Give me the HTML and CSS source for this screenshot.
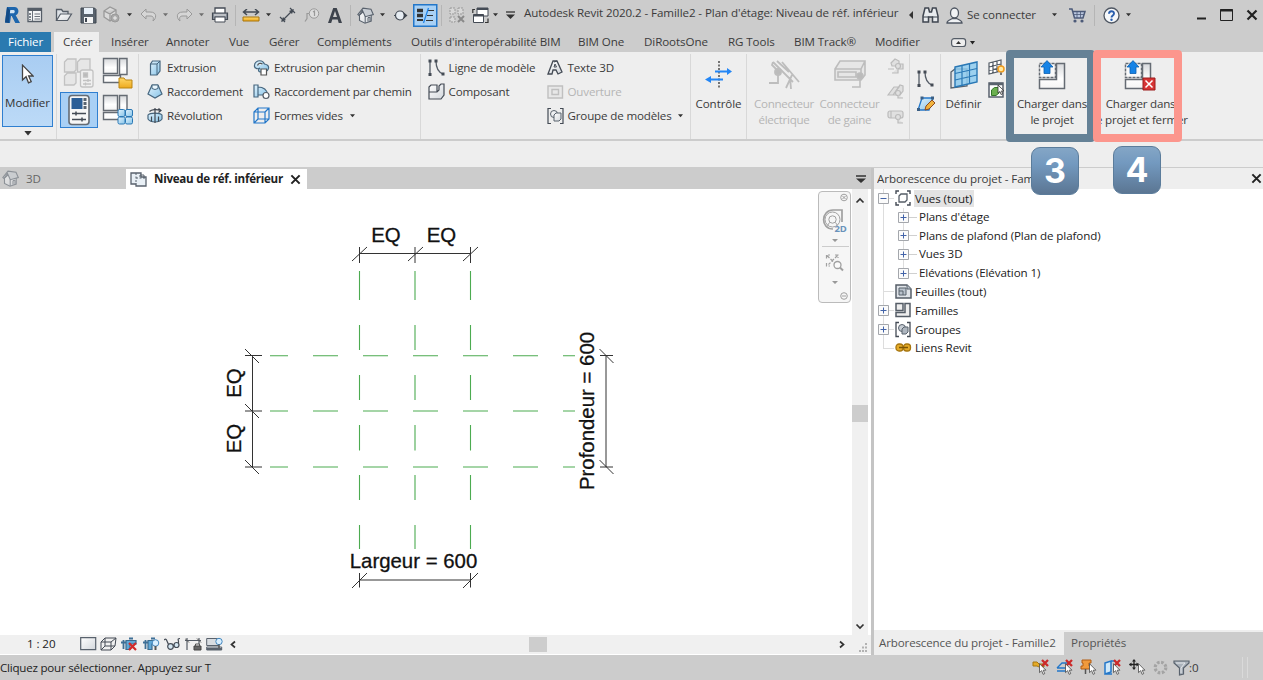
FILE: index.html
```html
<!DOCTYPE html>
<html lang="fr">
<head>
<meta charset="utf-8">
<title>Autodesk Revit 2020.2 - Famille2</title>
<link rel="stylesheet" href="styles.css">
</head>
<body>
<svg class="sprite" width="0" height="0" aria-hidden="true">
  <defs>
    <linearGradient id="g-metal" x1="0" y1="0" x2="1" y2="1"><stop offset="0" stop-color="#fff"/><stop offset="1" stop-color="#d3d7dc"/></linearGradient>
    <linearGradient id="g-plate" x1="0" y1="0" x2="0" y2="1"><stop offset="0" stop-color="#d6d8db"/><stop offset=".6" stop-color="#fff"/><stop offset="1" stop-color="#f4f4f4"/></linearGradient>
    <linearGradient id="g-sky" x1="0" y1="0" x2="1" y2="1"><stop offset="0" stop-color="#e2f3fd"/><stop offset="1" stop-color="#86c3e8"/></linearGradient>
    <linearGradient id="g-gold" x1="0" y1="0" x2="0" y2="1"><stop offset="0" stop-color="#ffd768"/><stop offset="1" stop-color="#eda91e"/></linearGradient>
    <symbol id="caret" viewBox="0 0 6 4"><path d="M0 0h6L3 3.600z" fill="#333"/></symbol>
    <symbol id="sep" viewBox="0 0 1 21"><path d="M.5 0v21" stroke="#b5b5b5"/></symbol>
    <symbol id="cross" viewBox="0 0 12 12"><path d="M1.500 1.500l9 9M10.500 1.500l-9 9" stroke="#222" stroke-width="2.200"/></symbol>
    <symbol id="redx" viewBox="0 0 8 8"><path d="M1 1l6 6M7 1L1 7" stroke="#cc2a2a" stroke-width="2.300"/></symbol>
    <symbol id="cursor" viewBox="0 0 9 14"><path d="M1 .8v10.400l2.500-2.300 1.700 4.300 1.900-.8-1.800-4H8.500z" fill="#fff" stroke="#444" stroke-width=".9"/></symbol>
    <symbol id="house" viewBox="0 0 17 17"><path d="M2.500 8v5.500L8 16.200l6.200-2.200V8L8 3z" fill="url(#g-metal)" stroke="#59626d" stroke-width="1.100"/><path d="M.8 7.500L6 1.200l8 1 2.300 5.300-8 2.200L5.500 3.500 2 8.500z" fill="#c9ced4" stroke="#59626d" stroke-width="1.100"/><path d="M8.200 9.500v6.500M11 14.500v-3.800l2-.5v3.700" fill="none" stroke="#59626d"/></symbol>
    <symbol id="family" viewBox="0 0 32 32"><path d="M1.500 1.500h14v15h-14z" fill="url(#g-plate)" stroke="#656b73" stroke-width="1.400"/><path d="M17.500 1.500h7.500v16h-7.500z" fill="url(#g-plate)" stroke="#656b73" stroke-width="1.400"/><path d="M1.500 18.500h17v7h-17z" fill="#fdfdfd" stroke="#656b73" stroke-width="1.400"/></symbol>
    <symbol id="plus" viewBox="0 0 11 11"><path d="M.5.500h10v10H.5z" fill="#fbfbfb" stroke="#a4a7ac"/><path d="M2.500 5.500h6M5.500 2.500v6" stroke="#4263a8"/></symbol>
    <symbol id="minus" viewBox="0 0 11 11"><path d="M.5.500h10v10H.5z" fill="#fbfbfb" stroke="#a4a7ac"/><path d="M2.500 5.500h6" stroke="#4263a8"/></symbol>
    <symbol id="load" viewBox="0 0 32 31"><path d="M1.500 3.500h16v14h-16z" fill="#fafafa" stroke="#656b73" stroke-width="1.500" stroke-dasharray="3 1"/><path d="M1.500 19.500h17v-16h8v25h-25z" fill="url(#g-plate)" stroke="#656b73" stroke-width="1.500"/><path d="M9 .600l6 6.400h-3V13.500H6V7H3z" fill="#1683e6" stroke="#0c5fb0" stroke-width=".8"/></symbol>
    <symbol id="curve" viewBox="0 0 17 18"><path d="M2 2v13M8 2c0 7 2 11 7 13" fill="none" stroke="#555d67" stroke-width="1.300"/><path d="M.5.500h3v3h-3zM.5 14h3v3h-3zM6.500.500h3v3h-3zM13.500 13.500h3v3h-3z" fill="#444b55"/></symbol>
  </defs>
</svg>

<div class="app">
  <header class="titlebar">
    <svg width="17" height="18"><path d="M1 16.500L3 1h7.500c4.500 0 5.500 6.500 1.200 8.300L16 17h-4.700l-3.600-7H7L6 17z" fill="#1e66ad"/><path d="M6.300 4h3.200c1.700 0 1.700 3.300-.4 3.300H5.800z" fill="#cfe3f5"/><path d="M1 16.500L3 1l3 3-1 13z" fill="#124a86"/></svg>
    <svg width="16" height="16"><path d="M1 1.500h13.500v13H1z" fill="#f3f4f5" stroke="#555d67" stroke-width="1.300"/><path d="M1 3h13.500" stroke="#555d67" stroke-width="2"/><path d="M3 6v7" stroke="#555d67" stroke-width="1.500" stroke-dasharray="2 1"/><path d="M5.500 4v10M7.500 7h5.500M7.500 9.500h5.500M7.500 12h5.500" stroke="#6a717a"/></svg>
    <svg width="18" height="16"><path d="M1.500 13.500V2.500h5l1.500 2h5v3" fill="#dde1e6" stroke="#555d67" stroke-width="1.300"/><path d="M1.500 13.500l4-6.500h11l-4 6.500z" fill="url(#g-metal)" stroke="#555d67" stroke-width="1.200"/></svg>
    <svg width="17" height="17"><path d="M1 1h13.500L16 2.500V16H1z" fill="#59626d" stroke="#3f4650"/><path d="M4 1h9v6H4z" fill="#e8f0f8"/><path d="M4 10h9v6H4z" fill="#f5f5f5"/><path d="M6 11v4" stroke="#3f4650" stroke-width="2"/></svg>
    <svg width="18" height="18"><path d="M1 5l6-4 6 3v8l-6 3-6-4zM1 5l6 3 6-4M7 8v7" fill="#d9d9d9" stroke="#999" stroke-width="1.300"/><circle cx="12" cy="12" r="4" fill="#aaa" stroke="#999"/><path d="M10 12h4M12 10v4" stroke="#eee"/></svg>
    <svg class="dd"><use href="#caret"/></svg>
    <svg width="17" height="15"><path d="M1 6l5-5v3h4c8 0 6 7 3 9 1-4 0-5-3-5H6v3z" fill="#d6d6d6" stroke="#999"/></svg>
    <svg class="dd dim"><use href="#caret"/></svg>
    <svg width="17" height="15"><path d="M16 6l-5-5v3H7C-1 4 1 11 4 13 3 9 4 8 7 8h4v3z" fill="#d6d6d6" stroke="#999"/></svg>
    <svg class="dd dim"><use href="#caret"/></svg>
    <svg width="18" height="16"><path d="M4 6V1h10v5" fill="#fff" stroke="#444b55" stroke-width="1.300"/><path d="M1.500 6h15v6.500h-15z" fill="#8b929c" stroke="#444b55" stroke-width="1.200"/><path d="M4 10h10v5H4z" fill="#fff" stroke="#444b55"/><path d="M3 8h12" stroke="#eee"/></svg>
    <svg width="1" height="21"><use href="#sep"/></svg>
    <svg width="18" height="13"><path d="M2 3h14M5 0L1.500 3 5 6M13 0l3.500 3L13 6" fill="none" stroke="#444b55" stroke-width="1.500"/><path d="M1 8h16v4H1z" fill="url(#g-gold)" stroke="#a8750b"/></svg>
    <svg class="dd"><use href="#caret"/></svg>
    <svg width="17" height="17"><path d="M3 14L14 3M1 10l5 5M11 1l5 5" stroke="#444b55" stroke-width="1.200"/><path d="M2 15l2-5 3 3zM15 2l-5 2 3 3z" fill="#444b55"/></svg>
    <svg width="16" height="15"><circle cx="10" cy="5.500" r="4.700" fill="#ddd" stroke="#999"/><path d="M9 4l1.500-1v5M5 5.500H3v5l-2 3" fill="none" stroke="#999" stroke-width="1.200"/></svg>
    <svg width="14" height="15"><path d="M0 15L5.200 0h3.500L14 15h-3.300l-1-3.500H4.300L3.200 15zM5 9h4L7 3z" fill="#3d434c" fill-rule="evenodd"/></svg>
    <svg width="1" height="21"><use href="#sep"/></svg>
    <svg width="17" height="17"><use href="#house"/></svg>
    <svg class="dd"><use href="#caret"/></svg>
    <svg width="15" height="13"><circle cx="6" cy="6.500" r="4.500" fill="#e7edf3" stroke="#444b55" stroke-width="1.200"/><path d="M7.500 1.500l6 5-6 5c3-3 3-7 0-10z" fill="#3d434c"/><path d="M0 6.500h2" stroke="#444b55"/></svg>
    <svg width="25" height="23"><path d="M.75.750h23v21.500h-23z" fill="#a9d1f5" stroke="#2377c9" stroke-width="1.500"/><path d="M4 6.500h6M4 11.500h6" stroke="#333" stroke-width="3.500"/><path d="M4 16h6" stroke="#333" stroke-width="2"/><path d="M15 6.500h6M14 11.500h6M13 16.500h7" stroke="#333"/><path d="M15.500 4l-5 15" stroke="#2386e8" stroke-width="1.300"/></svg>
    <svg width="1" height="21"><use href="#sep"/></svg>
    <svg width="17" height="17"><path d="M1 1h5v6H1zM9 1h5v6H9zM1 10h5v5H1z" fill="#d8d8d8" stroke="#999" stroke-dasharray="2 1"/><path d="M9 9l6 6M15 9l-6 6" stroke="#8a8a8a" stroke-width="2"/></svg>
    <svg width="17" height="17"><path d="M5 1h11v8H5z" fill="#fff" stroke="#444b55"/><path d="M5 2h11" stroke="#444b55" stroke-width="2"/><path d="M1.500 7.500h10v8h-10z" fill="#fff" stroke="#444b55"/><path d="M1.500 8.500h10" stroke="#444b55" stroke-width="2"/><path d="M3 2.500H.8v3.500M16 11.500v4h-3" fill="none" stroke="#333" stroke-width="1.200"/></svg>
    <svg class="dd"><use href="#caret"/></svg>
    <svg width="9" height="9"><path d="M0 1h9" stroke="#333" stroke-width="1.300"/><path d="M0 3.500h9L4.500 8z" fill="#333"/></svg>
    <span class="title-text">Autodesk Revit 2020.2 - Famille2 - Plan d'étage: Niveau de réf. inférieur</span>
    <svg width="5" height="8"><path d="M4 0v8L0 4z" fill="#333"/></svg>
    <svg width="17" height="16"><path d="M1 9L3 1h3.500l1 4h2l1-4H14l2 8v6h-5.500v-5h-4v5H1z" fill="#e8ebee" stroke="#3f4650" stroke-width="1.500"/><path d="M1 10h6M10 10h6" stroke="#3f4650"/></svg>
    <svg width="17" height="17"><ellipse cx="8.500" cy="6" rx="4" ry="5" fill="#f0f2f4" stroke="#4f5763" stroke-width="1.300"/><path d="M1 16c0-3 4-3.500 5.500-4.500h4C12 12.500 16 13 16 16z" fill="#f0f2f4" stroke="#4f5763" stroke-width="1.300"/></svg>
    <span class="signin">Se connecter</span>
    <svg class="dd"><use href="#caret"/></svg>
    <svg width="17" height="15"><path d="M0 1h3l2.500 9H14l2-6.500H4" fill="#b9c6de" stroke="#4c5a78" stroke-width="1.500"/><path d="M5 6.500h10M8 4v6M11.500 4v6" stroke="#4c5a78" stroke-width=".8"/><circle cx="6" cy="13" r="1.600" fill="#4c5a78"/><circle cx="13" cy="13" r="1.600" fill="#4c5a78"/></svg>
    <svg width="1" height="21"><use href="#sep"/></svg>
    <svg width="17" height="17"><circle cx="8.500" cy="8.500" r="7.500" fill="#f6f8fa" stroke="#4f5763" stroke-width="1.300"/><path d="M6 6.800C6 3.300 11 3.500 11 6.500c0 2-2.500 1.800-2.500 4" fill="none" stroke="#2b5fae" stroke-width="1.900"/><circle cx="8.500" cy="12.700" r="1.200" fill="#2b5fae"/></svg>
    <svg class="dd"><use href="#caret"/></svg>
    <svg width="9" height="10"><path d="M0 8.500h9" stroke="#222" stroke-width="2"/></svg>
    <svg width="13" height="12"><path d="M.5.500h12v11H.5z" fill="none" stroke="#222"/><path d="M0 1.500h13" stroke="#222" stroke-width="2"/></svg>
    <svg width="12" height="12"><use href="#cross"/></svg>
  </header>

  <nav class="tabs">
    <span class="tab tab-file">Fichier</span>
    <span class="tab tab-on">Créer</span>
    <span class="tab">Insérer</span>
    <span class="tab">Annoter</span>
    <span class="tab">Vue</span>
    <span class="tab">Gérer</span>
    <span class="tab">Compléments</span>
    <span class="tab">Outils d'interopérabilité BIM</span>
    <span class="tab">BIM One</span>
    <span class="tab">DiRootsOne</span>
    <span class="tab">RG Tools</span>
    <span class="tab">BIM Track®</span>
    <span class="tab">Modifier</span>
    <svg width="25" height="9"><rect x=".6" y=".6" width="14" height="8" rx="2.500" fill="#eee" stroke="#555d67" stroke-width="1.200"/><path d="M5 6h5L7.500 3z" fill="#333"/><path d="M19 3h5L21.500 6.500z" fill="#222"/></svg>
  </nav>

  <section class="ribbon">
    <div class="panel modify">
      <button class="modify-btn">
        <svg width="13" height="20" viewBox="0 0 9 14"><use href="#cursor"/></svg>
        <span>Modifier</span>
      </button>
      <svg class="modify-dd" width="8" height="5" viewBox="0 0 6 4"><use href="#caret"/></svg>
    </div>

    <div class="panel props">
      <svg width="32" height="32" viewBox="0 0 32 32"><g fill="#e6e6e6" stroke="#c2c2c2" stroke-width="1.300"><path d="M1.500 5l3-3H13v11l-2 2H1.500zM14.500 5l3-3H27v11l-2 2H14.500zM1.500 19l3-3H13v10l-2 2H1.500z"/><rect x="17.500" y="13" width="12.500" height="17" rx="2" fill="#f0f0f0"/><path d="M20.500 16h4v4h-4zM20 23.500h8M20 27h8M25 22v3M22.500 25.500v3" fill="#bbb"/></g></svg>
      <svg width="32" height="32" viewBox="0 0 32 32"><use href="#family" width="32" height="32"/><path d="M17 21h5l1.500 2H30v8H17z" fill="url(#g-gold)" stroke="#bb8513"/></svg>
      <span class="type-btn"><svg width="22" height="32"><rect x="1" y="1.500" width="20" height="29" rx="3" fill="#f7f7f7" stroke="#656b73" stroke-width="1.600"/><path d="M3.500 4h11v11h-11z" fill="#2c5f97"/><path d="M17 4v11" stroke="#5a6470" stroke-width="3" stroke-dasharray="3 1"/><path d="M4 19.500h14M4 25.500h14M8 17.500v4M14 23.500v4" stroke="#444b55" stroke-width="1.500"/></svg></span>
      <svg width="32" height="32" viewBox="0 0 32 32"><use href="#family" width="32" height="32"/><g fill="url(#g-sky)" stroke="#2a78b5"><rect x="16" y="15.500" width="7" height="7" rx="1.500"/><rect x="23.500" y="15.500" width="7" height="7" rx="1.500"/><rect x="16" y="23" width="7" height="7" rx="1.500"/><rect x="23.500" y="23" width="7" height="7" rx="1.500"/></g></svg>
    </div>

    <div class="panel forms">
      <span class="cmd"><svg width="16" height="18"><path d="M3.500 5l2-3H13v10l-3 4H3.500z" fill="url(#g-sky)" stroke="#46667f" stroke-width="1.200"/><path d="M3.500 5H10v11M10 5l3-3" fill="none" stroke="#46667f"/></svg>Extrusion</span>
      <span class="cmd"><svg width="17" height="18"><path d="M1.500 7.500c-.5-4 3-6.500 7-5.500 2 .5 2 2 3 3 3 .5 4.500 2 4 4.500-.4 2-2 3-4 3.500H7c-2-.5-2-3 0-4-2 1.500-5 .5-5.500-1.500z" fill="url(#g-sky)" stroke="#46667f" stroke-width="1.200"/><path d="M4.500 6.500c1-2.500 3.500-2.500 5-1.500M8 10h5.500v6H8z" fill="#fff" stroke="#555" stroke-width="1.200"/></svg>Extrusion par chemin</span>
      <span class="cmd"><svg width="16" height="18"><path d="M5 2h6l4 9-7 4-7-4z" fill="url(#g-sky)" stroke="#46667f" stroke-width="1.200"/><path d="M5 2h6v3.500L8 6.500l-3-1z" fill="#e9f6fd" stroke="#46667f"/></svg>Raccordement</span>
      <span class="cmd"><svg width="17" height="18"><path d="M1 2h4v12H1zM5 4c5 0 9 3 10 8H5z" fill="url(#g-sky)" stroke="#46667f" stroke-width="1.200"/><circle cx="13" cy="12.500" r="3" fill="#fff" stroke="#555d67" stroke-width="1.200"/></svg>Raccordement par chemin</span>
      <span class="cmd"><svg width="16" height="18"><path d="M1 8c2-2.500 12-2.500 14 0v4c-3 4-11 4-14 0z" fill="url(#g-sky)" stroke="#46667f" stroke-width="1.200"/><path d="M2.500 4.500c2-2 7-2.500 11-1M11.500 1.500L14 3.500l-2.500 2M8 1v15M4.500 9.500v5M11.500 9.500v5" fill="none" stroke="#3f4650" stroke-width="1.200"/></svg>Révolution</span>
      <span class="cmd"><svg width="17" height="18"><path d="M1 5l4-4h11v11l-4 4H1zM1 5h11v11M12 5l4-4M5 1v11h11M5 12l-4 4" fill="none" stroke="#2377c9" stroke-width="1.200"/></svg>Formes vides<svg class="dd cmd-dd"><use href="#caret"/></svg></span>
    </div>

    <div class="panel model">
      <span class="cmd"><svg width="17" height="18"><use href="#curve"/></svg>Ligne de modèle</span>
      <span class="cmd"><svg width="17" height="18"><path d="M1 15L6 2h4l5 11-4 2-2-4H6l-1 4z" fill="url(#g-metal)" stroke="#444b55" stroke-width="1.300"/><path d="M7 8l1-3 1.500 3zM10 2l-3 1" fill="#fff" stroke="#444b55"/></svg>Texte 3D</span>
      <span class="cmd"><svg width="17" height="18"><path d="M1 4l2-2h6v7H1zM1 9h8l2-2V3l2-2h3v11l-3 4H1z" fill="url(#g-metal)" stroke="#444b55" stroke-width="1.200"/></svg>Composant</span>
      <span class="cmd off"><svg width="17" height="18"><path d="M1 3h14.500v12H1zM5 6.500h6.500v5H5z" fill="#e8e8e8" stroke="#c0c0c0" stroke-width="1.400"/></svg>Ouverture</span>
      <span></span>
      <span class="cmd"><svg width="17" height="18"><path d="M4 1.500H1v15h3M13 1.500h3v15h-3" fill="none" stroke="#444b55" stroke-width="1.200"/><circle cx="7" cy="7" r="3.500" fill="url(#g-metal)" stroke="#59626d"/><path d="M7 8l2-2h5v6l-2 2H7z" fill="url(#g-metal)" stroke="#59626d"/></svg>Groupe de modèles<svg class="dd cmd-dd"><use href="#caret"/></svg></span>
    </div>

    <div class="panel big control">
      <svg width="28" height="30"><path d="M14 1v28" stroke="#555" stroke-width="1.600" stroke-dasharray="2 1.500"/><path d="M10 11.500h13M5 19.500h13" stroke="#2386f5" stroke-width="1.800"/><path d="M22 8l5 3.500-5 3.500zM6 16l-6 3.500L6 23z" fill="#2386f5"/></svg>
      <span>Contrôle</span>
    </div>

    <div class="panel connectors off">
      <div class="big">
        <svg width="32" height="30"><g fill="none" stroke="#bdbdbd" stroke-width="1.800"><path d="M5 2l20 20M9 1l12 11M14 2l17 20M24 15l-6 13M22 17l1 12M5 2l-1 3 8 8"/><circle cx="10" cy="12" r="3" fill="#bbb"/><path d="M10 15v8H1"/></g></svg>
        <span>Connecteur<br>électrique</span>
      </div>
      <div class="big">
        <svg width="32" height="30"><g fill="#e6e6e6" stroke="#bdbdbd" stroke-width="1.600"><path d="M1 9l5-8h25v14l-4 5H1zM1 9h26v11M27 9l4-8M4 12h18v5H4z"/><circle cx="26" cy="16" r="3" fill="#bbb"/><path d="M26 19v8h-8" fill="none"/></g></svg>
        <span>Connecteur<br>de gaine</span>
      </div>
      <div class="stack">
        <svg width="18" height="17"><g fill="#e0e0e0" stroke="#bbb" stroke-width="1.200"><path d="M4 5l4-4 4 2v3h4v5h-6V8H5z"/><circle cx="11" cy="8" r="2.500"/><path d="M1 11h6M11 10v5H5"/></g></svg>
        <svg width="18" height="17"><g fill="#e0e0e0" stroke="#bbb" stroke-width="1.200"><path d="M1 12L7 4h5l-6 8zM6 12l7-10 3 1v5l-3 4z"/><circle cx="11" cy="10" r="2.500"/><path d="M11 12v3h5"/></g></svg>
        <svg width="18" height="17"><g fill="#e0e0e0" stroke="#bbb" stroke-width="1.200"><rect x="1" y="3" width="15" height="7" rx="2"/><path d="M4 3v7"/><circle cx="11" cy="9" r="2.500"/><path d="M11 11v4h5"/></g></svg>
      </div>
    </div>

    <div class="panel datum">
      <svg width="17" height="18"><use href="#curve"/></svg>
      <svg width="18" height="18"><path d="M5 3h11l-4 12H1z" fill="url(#g-sky)" stroke="#2377c9" stroke-width="1.300"/><path d="M3.500 1.500h3v3h-3zM14 1.500h3v3h-3zM0 13h3v3H0z" fill="#3b5f84"/><path d="M8 15l1-4 6-6 3 3-6 6z" fill="#f2b33d" stroke="#8d4b20"/></svg>
    </div>

    <div class="panel workplane">
      <div class="big">
        <svg width="28" height="30"><path d="M1 12l4-3h12v17L1 28z" fill="#dfe3e7" stroke="#59626d" stroke-width="1.300"/><path d="M5 7l22-5v20L5 27z" fill="#8ecbee" fill-opacity=".85" stroke="#2a78b5" stroke-width="1.400"/><path d="M12 5.500v20M19.500 4v20M5 13.500l22-5M5 20l22-5" stroke="#2a78b5" stroke-width="1.200"/></svg>
        <span>Définir</span>
      </div>
      <div class="stack">
        <svg width="17" height="17"><path d="M1 4l12-3v11L1 15zM5 3v11M9 2v11M1 8l12-3M1 11.500l12-3" fill="#fff" stroke="#555d67" stroke-width="1.200"/><circle cx="13" cy="10" r="3" fill="#ffe9a3" stroke="#f09b1d" stroke-width="1.500"/><path d="M13 13.500v2.500" stroke="#777" stroke-width="2"/></svg>
        <svg width="17" height="17"><path d="M1 1h14v14H1z" fill="#fff" stroke="#59626d" stroke-width="1.500"/><path d="M1 2h14" stroke="#59626d" stroke-width="2.500"/><path d="M3.500 8l3-2.500H11v5.500l-3 2.500H3.500z" fill="#6bb04f" stroke="#34752a"/><path d="M10 3v8l2-1.500 1 3 1.500-.6-1-3H16z" fill="#fff" stroke="#333" stroke-width=".8"/></svg>
      </div>
    </div>

    <div class="panel big load">
      <svg width="28" height="31" viewBox="0 0 28 31"><use href="#load" width="32" height="31"/></svg>
      <span>Charger dans<br>le projet</span>
    </div>
    <div class="panel big load-close">
      <svg width="32" height="31"><use href="#load"/><path d="M19 18h12v12H19z" fill="#d73535" stroke="#9c1c1c"/><path d="M21.500 20.500l7 7M28.500 20.500l-7 7" stroke="#fff" stroke-width="1.500"/></svg>
      <span>Charger dans<br>le projet et fermer</span>
    </div>
  </section>

  <div class="optionsbar"></div>

  <main class="workspace">
    <section class="view">
      <div class="doctabs">
        <span class="doc"><svg width="17" height="17" opacity=".55"><use href="#house"/></svg>3D</span>
        <span class="doc doc-on"><svg width="17" height="15"><path d="M1 1h10v4h5v9H6v-2H1z" fill="#e9f0f6" stroke="#59626d" stroke-width="1.300"/><path d="M6 1v11M6 6h10" fill="none" stroke="#59626d" stroke-dasharray="2 1.500"/><path d="M10 5V3h4v3" fill="none" stroke="#59626d"/></svg>Niveau de réf. inférieur<svg width="11" height="11" viewBox="0 0 12 12"><use href="#cross"/></svg></span>
        <svg class="doc-menu" width="10" height="8"><path d="M0 1h10" stroke="#333" stroke-width="1.500"/><path d="M0 3.500h10L5 8z" fill="#333"/></svg>
      </div>
      <div class="canvas-row">
        <div class="canvas">
          <svg class="drawing" viewBox="0 189 852 446" width="852" height="446">
            <g class="ref">
              <path d="M359.500 271v29m0 25v25m0 25v25m0 25v25.500m0 24.500v25m0 25v24"/>
              <path d="M415 271v29m0 25v25m0 25v25m0 25v25.500m0 24.500v25m0 25v24"/>
              <path d="M470.500 271v29m0 25v25m0 25v25m0 25v25.500m0 24.500v25m0 25v24"/>
              <path d="M270 355.700h18m25 0h25m25 0h25m25 0h25m25 0h25m25 0h25m25 0h12"/>
              <path d="M270 411h18m25 0h25m25 0h25m25 0h25m25 0h25m25 0h25m25 0h12"/>
              <path d="M270 467h18m25 0h25m25 0h25m25 0h25m25 0h25m25 0h25m25 0h12"/>
            </g>
            <g class="dim-line">
              <path d="M359.500 253.500h111M359.500 247v16m55.500-16v16m55.500-16v16M352 261l15-14m41 14l15-14m40 14l15-14"/>
              <path d="M359.500 580h111M359.500 573v14.500m111-14.500v14.500M352 588l15-15m96 15l15-15"/>
              <path d="M252.500 355.500v111.500M245 355.500h17m-17 55.500h17m-17 56h17M245 349l14 14m-14 41l14 14m-14 42l14 14"/>
              <path d="M606 355.500v111.500M600 355.500h13m-13 111.500h13M599.500 349l14 14m-14 97l14 14"/>
            </g>
            <g class="dim-text">
              <text x="386" y="241.500">EQ</text>
              <text x="441.500" y="241.500">EQ</text>
              <text transform="translate(240.500 383) rotate(-90)">EQ</text>
              <text transform="translate(240.500 438.500) rotate(-90)">EQ</text>
              <text x="413.500" y="568">Largeur = 600</text>
              <text transform="translate(594 411) rotate(-90)">Profondeur = 600</text>
            </g>
          </svg>
          <div class="navbar">
            <svg width="32" height="110"><g fill="none" stroke="#a0a0a0"><circle cx="25" cy="5.500" r="3.300"/><path d="M23.500 4l3 3m0-3l-3 3"/><path d="M14 37C1 37 2 18 14 18h9v12" stroke-width="1.700"/><circle cx="13.500" cy="27.500" r="7.500"/><circle cx="13.500" cy="27.500" r="3.700"/><path d="M8.500 33.500l2-3M18.500 33.500l-2-3"/><path d="M3 54.500h27" stroke="#ccc"/><path d="M7.500 66.500V63H11M16 63h3v3M7.500 71v3H11M8 63.500l9 9M18.500 63.500l-9 9" stroke-width="1.200" stroke-dasharray="3.500 1.500"/><circle cx="18.500" cy="73" r="3.500" fill="#fafafa" stroke-width="1.300"/><path d="M21 75.500l3 3" stroke-width="2"/><circle cx="25" cy="104" r="3.300"/><path d="M23 104h4"/></g><path d="M13 47h6l-3 3zM13 89h6l-3 3z" fill="#999"/><text x="15.500" y="39.500" class="nav-2d">2D</text></svg>
          </div>
        </div>
        <div class="vscroll">
          <svg width="10" height="7"><path d="M1.500 5.500L5 2l3.500 3.500" fill="none" stroke="#333" stroke-width="1.700"/></svg>
          <i class="vthumb"></i>
          <svg width="10" height="7"><path d="M1.500 1.500L5 5l3.500-3.500" fill="none" stroke="#333" stroke-width="1.700"/></svg>
        </div>
      </div>
      <div class="viewbar">
        <span class="scale">1 : 20</span>
        <svg width="17" height="14"><path d="M.7.700h15v12H.7z" fill="url(#g-metal)" stroke="#59626d" stroke-width="1.200"/></svg>
        <svg width="17" height="14"><path d="M1 5l4-4h11l-1 8-4 4H1zM1 5h10v8M11 5l5-4M5 1v8h10M5 9l-4 4" fill="none" stroke="#444b55"/></svg>
        <svg width="17" height="14"><path d="M5 12.500V3.500h10V7H9v5.500z" fill="#5fa8d8" stroke="#3b6b8e" stroke-width="1.200"/><path d="M0 5.500h5M2.500 3v9M8 1.500h4" stroke="#3f6f96" stroke-width="1.800"/><path d="M8 6l7 7M15 6l-7 7" stroke="#d12b2b" stroke-width="2.200"/></svg>
        <svg width="17" height="14"><path d="M5 12.500V3.500h8V7H9v5.500z" fill="#5fa8d8" stroke="#3b6b8e" stroke-width="1.200"/><path d="M0 5.500h5M2.500 3v9M8 1.500h4" stroke="#3f6f96" stroke-width="1.800"/><circle cx="12.500" cy="6" r="3.300" fill="#d9efff" stroke="#4487be"/><path d="M12.500 9v4" stroke="#555" stroke-width="2"/></svg>
        <svg width="17" height="14"><path d="M0 3c3-3 3 3 5 5M16 1.500c-4 0 0 3-2 5M8 9l2-1" fill="none" stroke="#444b55" stroke-width="1.200"/><circle cx="6.500" cy="9.500" r="2.800" fill="#d5e7f2" stroke="#444b55" stroke-width="1.200"/><circle cx="12.500" cy="8" r="2.500" fill="#d5e7f2" stroke="#444b55" stroke-width="1.200"/></svg>
        <svg width="17" height="14"><path d="M2 1v12M0 3.500h16M14 1v6" fill="none" stroke="#555d67" stroke-width="1.200"/><path d="M0 1.500l4 4M12 1.500l4 4" stroke="#555"/><path d="M9 9h7v4H9z" fill="#666" stroke="#444"/><path d="M10.500 9V7h4v2" fill="none" stroke="#555"/></svg>
        <svg width="17" height="14"><path d="M.7 1.500h12v7H.7zM.7 10h15v3H.7z" fill="#d8dde2" stroke="#59626d"/><path d="M1 12h15" stroke="#59626d" stroke-width="2"/><circle cx="13" cy="4.500" r="3.200" fill="#d9efff" stroke="#4487be"/><path d="M13 7.500v3.500" stroke="#555" stroke-width="1.500"/></svg>
        <svg width="7" height="9"><path d="M5 1.500L1.500 4.500l3.500 3" fill="none" stroke="#333" stroke-width="1.700"/></svg>
        <i class="hthumb"></i>
        <svg width="7" height="9"><path d="M1 1.500l3.500 3L1 7.500" fill="none" stroke="#333" stroke-width="1.700"/></svg>
        <svg class="grip" width="9" height="9"><path d="M7 0h2v2H7zM4 3.500h2v2H4zM7 3.500h2v2H7zM1 7h2v2H1zM4 7h2v2H4zM7 7h2v2H7z" fill="#b2b2b2"/></svg>
      </div>
    </section>

    <aside class="browser">
      <div class="browser-head"><span>Arborescence du projet - Famille2</span><svg width="11" height="11" viewBox="0 0 12 12"><use href="#cross"/></svg></div>
      <ul class="tree">
        <li class="root"><svg class="box"><use href="#minus"/></svg><svg width="17" height="17"><path d="M4 1H1v3M12 1h3v3M4 15H1v-3M12 15h3v-3" fill="none" stroke="#444b55" stroke-width="1.400"/><path d="M4 6l2-2h6v6l-2 2H4z" fill="#fff" stroke="#555d67" stroke-width="1.300"/></svg><span class="picked">Vues (tout)</span></li>
        <li class="child"><svg class="box"><use href="#plus"/></svg><i></i><span>Plans d'étage</span></li>
        <li class="child"><svg class="box"><use href="#plus"/></svg><i></i><span>Plans de plafond (Plan de plafond)</span></li>
        <li class="child"><svg class="box"><use href="#plus"/></svg><i></i><span>Vues 3D</span></li>
        <li class="child last"><svg class="box"><use href="#plus"/></svg><i></i><span>Elévations (Elévation 1)</span></li>
        <li class="root"><b class="box"></b><svg width="17" height="15"><path d="M1 1h11l4 4v9H1z" fill="#dfe3e8" stroke="#555d67" stroke-width="1.500"/><path d="M4 4h7v7H4zM4 7h4v4M12 1v4h4" fill="#b9c2cc" stroke="#59626d"/></svg><span>Feuilles (tout)</span></li>
        <li class="root"><svg class="box"><use href="#plus"/></svg><svg width="17" height="17"><path d="M1 1.500h7v7H1zM1 10.500h9v-9h5v13H1z" fill="#eee" stroke="#555d67" stroke-width="1.500"/></svg><span>Familles</span></li>
        <li class="root"><svg class="box"><use href="#plus"/></svg><svg width="17" height="17"><path d="M4 1.500H1v14h3M12 1.500h3v14h-3" fill="none" stroke="#444b55" stroke-width="1.300"/><circle cx="7" cy="7" r="3.500" fill="#c8ced5" stroke="#59626d"/><path d="M7 8l2-2h4v5l-2 2H7z" fill="#aeb6bf" stroke="#59626d"/></svg><span>Groupes</span></li>
        <li class="root last"><b class="box"></b><svg width="17" height="9"><rect x="1" y="1" width="7" height="7" rx="3" fill="#e5ab28" stroke="#a77610" stroke-width="1.300"/><rect x="8.500" y="1" width="7" height="7" rx="3" fill="#e5ab28" stroke="#a77610" stroke-width="1.300"/><path d="M4 4.500h9" stroke="#7b5505" stroke-width="1.500"/></svg><span>Liens Revit</span></li>
      </ul>
      <div class="browser-tabs"><span class="on">Arborescence du projet - Famille2</span><span>Propriétés</span></div>
    </aside>
  </main>

  <footer class="status">
    <span class="hint">Cliquez pour sélectionner. Appuyez sur T</span>
    <svg width="17" height="17"><path d="M1 3h4l2 2h5v3H7L5 7H1z" fill="#e5ab28" stroke="#a77610"/><use href="#redx" x="9" y="0" width="8" height="8"/><use href="#cursor" x="6" y="4" width="9" height="12"/></svg>
    <svg width="17" height="17"><path d="M1 9l5-5h6M1 12h9M1 9h9" fill="none" stroke="#2377c9" stroke-width="1.300"/><use href="#redx" x="9" y="0" width="8" height="8"/><use href="#cursor" x="8" y="4" width="9" height="12"/></svg>
    <svg width="17" height="17"><path d="M2 1h9v3H9v3h2v3H1V7h2V4H2z" fill="#f09a3c" stroke="#b25d13"/><path d="M5.500 10v5" stroke="#555" stroke-width="1.500"/><use href="#cursor" x="8" y="4" width="9" height="12"/></svg>
    <svg width="17" height="17"><path d="M1 4l6-2v11l-6 2zM7 2h4M1 15h7" fill="#d0e8f8" stroke="#2377c9" stroke-width="1.500"/><use href="#redx" x="9" y="0" width="8" height="8"/><use href="#cursor" x="8" y="4" width="9" height="12"/></svg>
    <svg width="17" height="17"><path d="M5 1v9M.5 5.500h9" stroke="#222" stroke-width="1.300"/><path d="M3 2.500h4L5 0zM3 8.500h4L5 11zM2.500 3.500v4L0 5.500zM7.500 3.500v4l2.500-2z" fill="#222"/><use href="#cursor" x="8" y="4" width="9" height="12"/></svg>
    <svg width="15" height="15"><circle cx="7.500" cy="7.500" r="5.300" fill="none" stroke="#a4a4a4" stroke-width="3.200" stroke-dasharray="2.600 1.560"/></svg>
    <svg width="17" height="16"><path d="M1 1h15v2l-5.500 5v6l-4 1V8L1 3z" fill="#aab2bb" stroke="#59626d" stroke-width="1.200"/><path d="M3 3h9L8 8v5" fill="none" stroke="#e6e9ec"/></svg>
    <span>:0</span>
    <i class="rule"></i>
    <i class="rule"></i>
  </footer>

  <div class="callout callout-3"></div>
  <div class="callout callout-4"></div>
  <span class="key key-3">3</span>
  <span class="key key-4">4</span>
</div>
</body>
</html>
```
FILE: styles.css
```css
* { box-sizing: border-box; }

body {
  margin: 0;
  font: 11.6px/16px "Open Sans", "Noto Sans", sans-serif;
  letter-spacing: -0.09px;
  color: #3b3b3b;
  background: #ccc;
}

svg { display: block; flex: none; }
i { display: block; }
.sprite { position: absolute; }

.app {
  position: relative;
  width: 1263px;
  height: 680px;
  overflow: hidden;
  display: grid;
  grid-template-rows: 30px 22px 89px 27px 487px 25px;
  white-space: nowrap;
}

.dd { width: 5px; height: 4px; }
.dim { opacity: .6; }
.off { color: #b5b5b5; }

/* Title bar */
.titlebar {
  display: grid;
  grid-template-columns:
    23px 28px 25px 23px 24px 13px 23px 13px 23px 12px
    24px 7px 24px 13px 25px 24px 22px 7px 23px 14px
    19px 28px 8px 23px 21px 13px 18px
    385px 13px 24px 21px 85px 17px 25px 9px 23px 71px 23px 26px 14px;
  padding-left: 4px;
  align-items: center;
  background: #ccc;
}
.title-text { margin-top: -5px; }

/* Ribbon tabs */
.tabs {
  display: grid;
  grid-template-columns: 54px 57px 55px 63px 40px 48px 94px 167px 66px 84px 66px 81px 76px 30px;
  align-items: center;
  padding-top: 2px;
  background: #ccc;
}
.tab { line-height: 20px; }
.tab-file { width: 51px; padding-left: 8px; background: #2a7ab0; color: #fff; }
.tab-on { width: 45px; padding-left: 9px; background: #eee; }

/* Ribbon */
.ribbon {
  display: grid;
  grid-template-columns: 57px 82px 282px 270px 56px 163px 31px 66px 90px 90px;
  background: #eee;
  border-bottom: 2px solid #ccc;
  padding-top: 2px;
}
.panel { border-right: 1px solid #d8d8d8; }
.workplane, .load, .load-close { border-right: 0; }

.modify { display: flex; flex-direction: column; align-items: center; gap: 4px; padding-top: 1px; }
.modify-btn {
  display: flex;
  flex-direction: column;
  align-items: center;
  gap: 11px;
  width: 51px;
  height: 72px;
  margin-right: 1px;
  padding: 8px 0 0;
  font: inherit;
  letter-spacing: inherit;
  color: #333;
  background: linear-gradient(#a9cdf2, #bcdaf7);
  border: 1.500px solid #2f7fd0;
}

.props {
  display: grid;
  grid-template-columns: 43px 32px;
  grid-template-rows: 36px 37px;
  align-items: center;
  padding: 1px 0 0 3px;
}
.props > svg { margin-left: -1px; }
.props > svg:first-child { margin-left: 3px; }
.type-btn {
  display: grid;
  place-items: center;
  width: 38px;
  height: 36px;
  background: #a9d0f5;
  border: 1px solid #2f7fd0;
}

.forms, .model { display: grid; grid-template-rows: repeat(3, 24px); padding-top: 2px; }
.forms { grid-template-columns: 106px auto; padding-left: 8px; letter-spacing: -0.22px; }
.model { grid-template-columns: 119px auto; padding-left: 7px; letter-spacing: -0.16px; }
.cmd { display: flex; align-items: center; gap: 4px; }
.model .cmd { gap: 3.500px; }
.cmd-dd { margin-left: 3px; }

.big { display: flex; flex-direction: column; align-items: center; gap: 4px; padding-top: 6px; text-align: center; }
.control { gap: 6px; }
.connectors { display: grid; grid-template-columns: 74px 57px 31px; letter-spacing: -0.3px; }
.connectors .big { padding-top: 6px; gap: 6px; }
.big span { line-height: 16px; }
.stack { display: flex; flex-direction: column; gap: 8px; padding: 4px 0 0 9px; }
.datum { display: flex; flex-direction: column; gap: 7px; padding: 16px 0 0 7px; }
.workplane { display: grid; grid-template-columns: 45px 21px; }
.workplane .big { gap: 6px; }
.workplane .stack { padding: 5px 0 0 2px; gap: 6px; }
.load { gap: 5px; letter-spacing: -0.18px; }
.load-close { gap: 5px; letter-spacing: -0.22px; }
.load-close span { margin-left: -3px; }
.load-close svg { margin-right: 4px; }

.optionsbar { background: #eee; border-bottom: 1px solid #ccc; }

/* Workspace */
.workspace { display: grid; grid-template-columns: 871px 392px; }
.view { display: grid; grid-template-rows: 21px 446px 20px; background: #fff; }

.doctabs { display: flex; align-items: center; background: #ccc; }
.doc { display: flex; align-items: center; gap: 7px; width: 124px; padding-left: 2px; color: #666; }
.doc-on {
  align-self: stretch;
  width: 181px;
  margin: 1px 0 0 2px;
  padding-left: 4px;
  background: #fff;
  color: #222;
  font-weight: 700;
  letter-spacing: -0.26px;
}
.doc-menu { margin-left: 549px; }

.canvas-row { display: grid; grid-template-columns: 852px 16px; }
.canvas { position: relative; background: #fff; }
.ref { fill: none; stroke: #4cab50; stroke-width: 1.100; }
.dim-line { fill: none; stroke: #333; stroke-width: 1; }
.dim-text {
  font: 20.400px "Liberation Sans", Arial, sans-serif;
  letter-spacing: 0;
  fill: #111;
  stroke: #111;
  stroke-width: .3;
  text-anchor: middle;
}
.navbar {
  position: absolute;
  top: 2px;
  right: 1px;
  width: 33px;
  height: 112px;
  background: #f6f6f6;
  border: 1px solid #bbb;
  border-radius: 4px;
}
.nav-2d { font: bold 9.500px "Open Sans", sans-serif; fill: #6a93bb; }

.vscroll { display: flex; flex-direction: column; align-items: center; justify-content: space-between; padding: 8px 0 5px; background: #f0f0f0; }
.vthumb { width: 16px; height: 17px; background: #cdcdcd; }

.viewbar {
  display: grid;
  grid-template-columns: 53px 20px 21px 22px 21px 21px 21px 24px 299px 310px 19px 12px;
  align-items: center;
  padding: 0 0 1px 27px;
  background: #f0f0f0;
  border-bottom: 1px solid #fff;
}
.scale { color: #222; }
.hthumb { width: 18px; height: 15px; background: #cdcdcd; }
.grip { align-self: end; margin-bottom: 1px; }

/* Project browser */
.browser {
  display: grid;
  grid-template-rows: 21px 441px 25px;
  border-left: 3px solid #c4c4c4;
  background: #fff;
}
.browser-head { display: flex; align-items: center; justify-content: space-between; padding: 0 1px 0 3px; background: #eee; }
.browser-head span { width: 154px; overflow: hidden; }
.tree { list-style: none; margin: 0; padding: 0 0 0 4px; color: #222; }
.tree li { position: relative; display: flex; align-items: center; height: 18.700px; }
.box { position: relative; z-index: 1; flex: none; width: 11px; height: 11px; }
.root > .box { margin-right: 6px; }
.root > span { margin-left: 2px; padding: 0 2px 0 1px; line-height: 17px; }
.root > .picked { background: #e3e3e3; }
.child { padding-left: 20px; }
.child i { width: 8px; height: 1px; margin-right: 2px; background: #d0d0d0; }
.tree li::before { content: ""; position: absolute; left: 5px; top: 0; height: 100%; border-left: 1px solid #ddd; }
.tree .root::after { content: ""; position: absolute; left: 5px; top: 9px; width: 11px; border-top: 1px solid #ddd; }
.tree .child::after { content: ""; position: absolute; left: 25px; top: 0; height: 100%; border-left: 1px solid #ddd; }
.tree .child.last::after,
.tree .root.last::before { height: 50%; }

.browser-tabs { display: flex; align-items: stretch; background: #ccc; border-top: 2px solid #eee; line-height: 22px; color: #555; }
.browser-tabs .on { width: 190px; padding-left: 5px; background: #eee; letter-spacing: -0.15px; }
.browser-tabs span + span { padding-left: 7px; }

/* Status bar */
.status {
  display: grid;
  grid-template-columns: 1032px 24px 24px 24px 25px 24px 20px 16px 53px 5px 6px;
  align-items: center;
  background: #ccc;
}
.status .hint { color: #222; letter-spacing: -0.23px; }
.rule { width: 1px; height: 21px; background: #dadada; }

/* Annotation layer */
.callout { position: absolute; top: 50px; width: 89px; height: 92px; border: 8px solid; border-radius: 4px; }
.callout-3 { left: 1006px; border-color: #658196; }
.callout-4 { left: 1093px; border-color: #fc968d; }
.key {
  position: absolute;
  display: grid;
  place-items: center;
  width: 48px;
  height: 48px;
  border: 1.500px solid #5b7c9b;
  border-radius: 9px;
  background: linear-gradient(#84a6c6, #7399bf 35%, #5b7693);
  color: #fff;
  font: 700 34px/1 Inter, "Open Sans", sans-serif;
}
.key-3 { left: 1031px; top: 147px; }
.key-4 { left: 1113px; top: 146px; }
```
